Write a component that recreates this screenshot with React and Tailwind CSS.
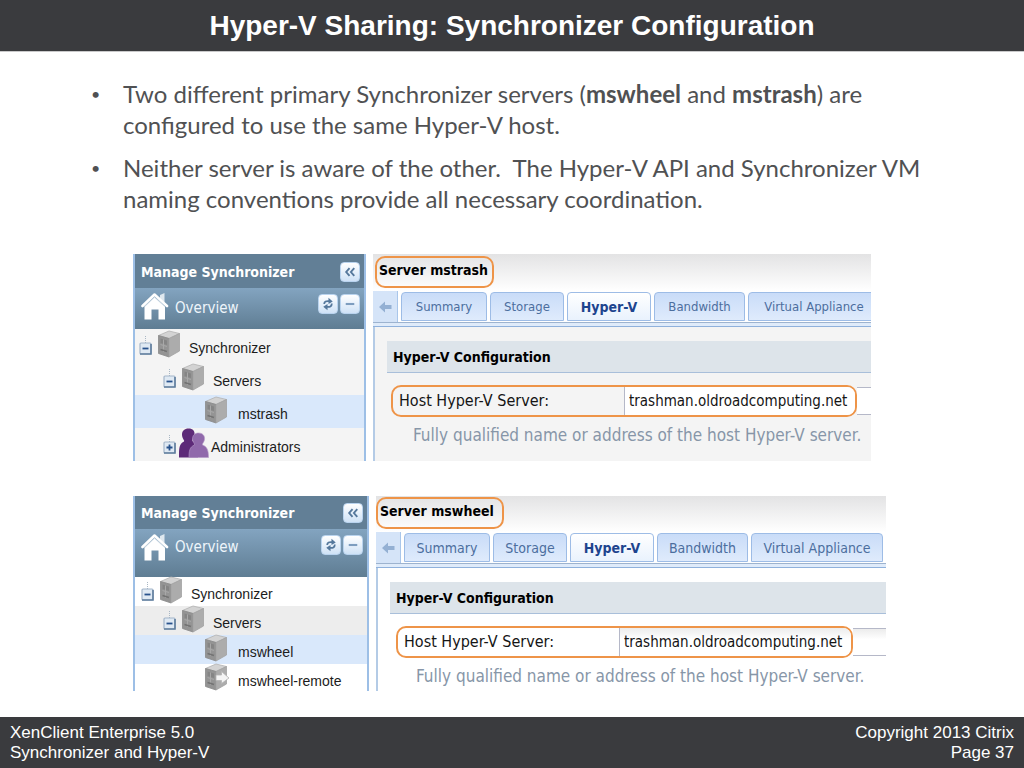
import React from "react";

const UI = "font-['DejaVu_Sans_Condensed','Noto_Sans',sans-serif]";

function ServerIcon({ remote }) {
  return (
    <svg width="27" height="28" viewBox="0 0 27 28" className="shrink-0" aria-hidden="true">
      <path d="M2.500 5.500 L13 1 L23.500 3.500 L13 8.500 Z" fill="#d3d3d3" stroke="#b3b3b3" strokeWidth=".8" strokeLinejoin="round" />
      <path d="M2.500 5.500 L13 8.500 V27 L2.500 23.500 Z" fill="#949494" stroke="#8a8a8a" strokeWidth=".8" strokeLinejoin="round" />
      <path d="M13 8.500 L23.500 3.500 V21 L13 27 Z" fill="#acacac" stroke="#a2a2a2" strokeWidth=".8" strokeLinejoin="round" />
      <path d="M4.500 8.500 L11 10.500 V15 L4.500 13 Z" fill="#858585" />
      <path d="M7.500 9.500 V22 M4.500 14.500 L11 16.500" stroke="#a8a8a8" strokeWidth="1" />
      <path d="M4.500 19.500 L11 21.500" stroke="#737373" strokeWidth="1.600" />
      {remote && (
        <path d="M13 12 H18.500 V8.500 L26 15 L18.500 20.500 V17.500 H13 Z" fill="#f4f4f4" stroke="#b4b4b4" strokeWidth=".8" />
      )}
    </svg>
  );
}

function AdminsIcon() {
  return (
    <svg width="31" height="30" viewBox="0 0 31 30" className="shrink-0" aria-hidden="true">
      <path d="M10.500 0.500 C15 0.500 17 3 16.500 7 C16 10.500 14 11.500 14.500 13 C18 15 20 18 20 29.500 H1 C1 20 1 16 6 13.500 C7 12.500 4 10.500 4 6.500 C4 3 6.500 0.500 10.500 0.500 Z" fill="#5d2a78" />
      <path d="M20.500 5 C25 5 27 8 26.500 11.500 C26 14.500 24 15.500 24.500 17 C29 18.500 30.500 22 30.500 29.500 H11 C11 23 11.500 19 16.500 17 C17 15.500 14.500 14 14.500 11 C14.500 7.500 16.500 5 20.500 5 Z" fill="#9069ab" stroke="#b59bc8" strokeWidth=".6" />
    </svg>
  );
}

function HomeIcon() {
  return (
    <svg width="28" height="28" viewBox="0 0 28 28" className="shrink-0" aria-hidden="true">
      <path d="M19 3 L23.500 1 V10.500 L19 6.500 Z" fill="#dfe8ef" />
      <path d="M3.500 14.500 L13.500 5 L24 14.500 V27.500 H17.500 V17.500 H10.500 V27.500 H3.500 Z" fill="#fff" />
      <path d="M1.500 14 L13.500 2.500 L26 14" fill="none" stroke="#fff" strokeWidth="2.600" strokeLinecap="round" strokeLinejoin="round" />
      <path d="M3.500 14.800 L13.500 5.300 L24 14.800" fill="none" stroke="#cddbe6" strokeWidth=".8" />
    </svg>
  );
}

function ToggleIcon({ open }) {
  return (
    <svg width="13" height="20" viewBox="0 0 13 20" aria-hidden="true">
      <path d="M6.500 0 V7" stroke="#a9b7c4" strokeWidth="1" strokeDasharray="1 1" />
      <rect x="1" y="7" width="11" height="11" rx="1" fill="#dfe9f3" stroke="#a3b5c9" strokeWidth="1.200" />
      <path d="M1 18 H12 V8" fill="none" stroke="#5f7d9d" strokeWidth="1.600" />
      <path d={open ? "M3.500 12.500 H9.500" : "M3.500 12.500 H9.500 M6.500 9.500 V15.500"} stroke="#28528c" strokeWidth="1.800" />
    </svg>
  );
}

const toolShapes = {
  collapse: <path d="M9 5.500 L5.500 9.500 L9 13.500 M14 5.500 L10.500 9.500 L14 13.500" fill="none" stroke="#55789c" strokeWidth="2" />,
  minus: <path d="M5 9.500 H14" stroke="#7d9dbf" strokeWidth="2.200" />,
  refresh: (
    <g fill="none" stroke="#55789c" strokeWidth="1.900">
      <path d="M5.500 9.500 C5.500 7 7.500 6 11 6.500" />
      <path d="M13.500 9 C13.500 12 11.500 13 8 12.500" />
      <path d="M10 3 L14.500 6.800 L10 9.600 Z M9 9.400 L4.500 12.300 L9 16 Z" fill="#55789c" stroke="none" />
    </g>
  ),
};

function ToolButton({ kind, label }) {
  return (
    <button type="button" aria-label={label} className="size-5 shrink-0 rounded border border-[#b9d3ee] bg-linear-to-b from-white to-[#cfe2f6]">
      <svg viewBox="0 0 19 19" className="size-full">{toolShapes[kind]}</svg>
    </button>
  );
}

function TreeRow({ item, rowClass }) {
  return (
    <li className={`flex items-center text-sm text-[#1c1c1c] ${rowClass} ${item.bg} ${item.indent}`}>
      {item.toggle ? (
        <button type="button" aria-label={`Toggle ${item.label}`} className="w-[13px] shrink-0">
          <ToggleIcon open={item.toggle === "open"} />
        </button>
      ) : null}
      <span className={`-mt-1 shrink-0 ${item.admins ? "ml-0.5" : "ml-1"}`}>
        {item.admins ? <AdminsIcon /> : <ServerIcon remote={item.remote} />}
      </span>
      <a href="#" className={`pt-1 ${item.gap}`}>{item.label}</a>
    </li>
  );
}

const tabs = [
  { label: "Summary", width: "w-[86px]" },
  { label: "Storage", width: "w-[74px]" },
  { label: "Hyper-V", width: "w-[84px]", active: true },
  { label: "Bandwidth", width: "w-[91px]" },
  { label: "Virtual Appliance", width: "w-[132px]" },
];

function Console({ c }) {
  return (
    <section className={`flex overflow-hidden ${c.frame}`}>
      <nav className={`shrink-0 border-x-2 border-[#9dbfe6] font-['Liberation_Sans',sans-serif] ${c.side}`}>
        <header className={`flex items-center justify-between bg-[#627f96] pl-1.5 pr-1 ${UI} ${c.head}`}>
          <h2 className="text-sm font-bold text-white">Manage Synchronizer</h2>
          <ToolButton kind="collapse" label="Collapse panel" />
        </header>
        <div className={`flex items-start gap-1.5 bg-linear-to-b from-[#83a4c0] to-[#5f7d93] pl-1.5 pr-1 pt-1 ${UI} ${c.overview}`}>
          <HomeIcon />
          <span className={`text-[15px] leading-6 text-[#eef5fb] ${c.overviewText}`}>Overview</span>
          <span className="ml-auto flex gap-0.5 pt-0.5">
            <ToolButton kind="refresh" label="Refresh" />
            <ToolButton kind="minus" label="Minimize" />
          </span>
        </div>
        <ul>
          {c.rows.map((r) => <TreeRow key={r.label} item={r} rowClass={c.row} />)}
        </ul>
      </nav>
      <div className={`ml-[7px] flex min-w-0 flex-1 flex-col overflow-hidden ${UI}`}>
        <div className={`bg-linear-to-b from-[#e3e3e4] to-white ${c.titleBar}`}>
          <h3 className={`flex h-8 items-start rounded-[10px] border-2 border-[#ee9448] pl-0.5 text-sm font-bold text-black ${c.title}`}>{c.name}</h3>
        </div>
        <div className="flex h-9 shrink-0 items-start border-b border-[#8fb1dc] bg-[#dfebfa]">
          <div className="flex h-8 w-full border-b border-[#9db3cf] bg-white">
            <button type="button" aria-label="Scroll tabs left" className="flex w-[25px] shrink-0 items-center justify-center border-r border-[#a9c6ea] bg-[#d5e4f8]">
              <svg width="13" height="12" viewBox="0 0 13 12"><path d="M0 6 L6 0.500 V4 H12.500 V8 H6 V11.500 Z" fill="#94b0d3" /></svg>
            </button>
            <div className="flex min-w-0 gap-[3px] pl-[3px] pt-px">
              {tabs.map((t) => (
                <button
                  key={t.label}
                  type="button"
                  className={`h-[29px] shrink-0 whitespace-nowrap rounded-t border border-[#9dbce6] ${t.width} ${t.active ? "bg-linear-to-b from-white to-[#e9f2fd] text-sm font-bold text-[#1d448e]" : `bg-linear-to-b from-[#c9dcf8] to-[#dfebfc] text-[#4c6e9e] ${c.tab}`}`}
                >
                  {t.label}
                </button>
              ))}
            </div>
          </div>
        </div>
        <div className={`flex-1 border-l-2 border-[#b4cbe6] pl-3 ${c.content}`}>
          <h4 className="flex h-8 items-center border-b border-[#a9bfda] bg-[#dde4ea] pl-1.5 text-sm font-bold text-black">Hyper-V Configuration</h4>
          <div className={`flex h-8 items-stretch ${c.field}`}>
            <div className={`flex shrink-0 overflow-hidden rounded-[10px] border-2 border-[#ee9448] ${c.pill}`}>
              <label htmlFor={c.id} className={`flex shrink-0 items-center pl-1.5 text-base text-[#151515] ${c.label}`}>Host Hyper-V Server:</label>
              <input id={c.id} defaultValue="trashman.oldroadcomputing.net" className={`min-w-0 flex-1 border-l border-[#b5b8c8] pl-1 text-[15px] text-[#151515] ${c.input}`} />
            </div>
            <div className={`my-0.5 flex-1 border-y border-[#b5b8c8] ${c.input}`} />
          </div>
          <p className={`whitespace-nowrap pl-[26px] text-[17px] leading-6 text-[#8796a8] ${c.hint}`}>Fully qualified name or address of the host Hyper-V server.</p>
        </div>
      </div>
    </section>
  );
}

const consoles = [
  {
    id: "host-mstrash",
    name: "Server mstrash",
    frame: "h-[207px] max-w-[738px]",
    side: "w-[233px]",
    head: "h-[34px] pt-0.5",
    overview: "h-[41px]",
    overviewText: "pt-1",
    row: "h-[33px]",
    rows: [
      { label: "Synchronizer", toggle: "open", indent: "pl-1", gap: "ml-1.5", bg: "bg-[#f4f4f4]" },
      { label: "Servers", toggle: "open", indent: "pl-7", gap: "ml-1.5", bg: "bg-[#f4f4f4]" },
      { label: "mstrash", indent: "pl-16", gap: "ml-2", bg: "bg-[#d9e8fb]" },
      { label: "Administrators", toggle: "closed", admins: true, indent: "pl-7", gap: "ml-0.5", bg: "bg-[#f4f4f4]" },
    ],
    titleBar: "h-[37px] pl-0.5 pt-0.5",
    title: "w-[119px] leading-6",
    tab: "text-[13px]",
    content: "bg-[#f4f4f4] pt-3.5",
    field: "mt-3 pl-1",
    pill: "w-[466px]",
    label: "w-[231px]",
    input: "bg-white",
    hint: "pt-1.5",
  },
  {
    id: "host-mswheel",
    name: "Server mswheel",
    frame: "mt-[35px] h-[195px] max-w-[753px]",
    side: "w-[236px]",
    head: "h-[33px]",
    overview: "h-[48px]",
    overviewText: "pt-0.5",
    row: "h-[29px]",
    rows: [
      { label: "Synchronizer", toggle: "open", indent: "pl-1.5", gap: "ml-1.5", bg: "bg-white" },
      { label: "Servers", toggle: "open", indent: "pl-7", gap: "ml-1.5", bg: "bg-[#ededed]" },
      { label: "mswheel", indent: "pl-16", gap: "ml-2", bg: "bg-[#d9e8fb]" },
      { label: "mswheel-remote", remote: true, indent: "pl-16", gap: "ml-2", bg: "bg-white" },
    ],
    titleBar: "h-[36px] pl-0 pt-px",
    title: "w-[128px] leading-6",
    tab: "text-sm",
    content: "bg-white pt-3.5",
    field: "mt-3 pl-1.5",
    pill: "w-[457px]",
    label: "w-[221px]",
    input: "bg-linear-to-b from-[#ececec] to-white to-40%",
    hint: "pt-1.5",
  },
];

export default function App() {
  return (
    <div className="flex min-h-screen flex-col bg-white font-['Liberation_Sans',sans-serif]">
      <header className="flex h-[52px] items-center justify-center border-b border-[#c9c9ca] bg-[#3a3b3e]">
        <h1 className="text-[28px] font-bold text-white">Hyper-V Sharing: Synchronizer Configuration</h1>
      </header>
      <main className="flex-1 px-[133px]">
        <ul className="-ml-[42px] -mr-8 flex flex-col gap-3 pt-[26px] font-['Lato',sans-serif] text-[24px] leading-[31px] text-[#505153]">
          <li className="flex">
            <span className="w-8 shrink-0 text-base leading-[31px]" aria-hidden="true">•</span>
            <p>
              Two different primary Synchronizer servers (<b>mswheel</b> and <b>mstrash</b>) are
              <br />
              configured to use the same Hyper-V host.
            </p>
          </li>
          <li className="flex">
            <span className="w-8 shrink-0 text-base leading-[31px]" aria-hidden="true">•</span>
            <p>
              Neither server is aware of the other.&nbsp; The Hyper-V API and Synchronizer VM
              <br />
              naming conventions provide all necessary coordination.
            </p>
          </li>
        </ul>
        <div className="pt-10">
          {consoles.map((c) => <Console key={c.id} c={c} />)}
        </div>
      </main>
      <footer className="flex h-[51px] items-center justify-between bg-[#3a3b3e] px-2.5 text-[17px] leading-5 text-white">
        <p>XenClient Enterprise 5.0<br />Synchronizer and Hyper-V</p>
        <p className="text-right">Copyright 2013 Citrix<br />Page 37</p>
      </footer>
    </div>
  );
}
